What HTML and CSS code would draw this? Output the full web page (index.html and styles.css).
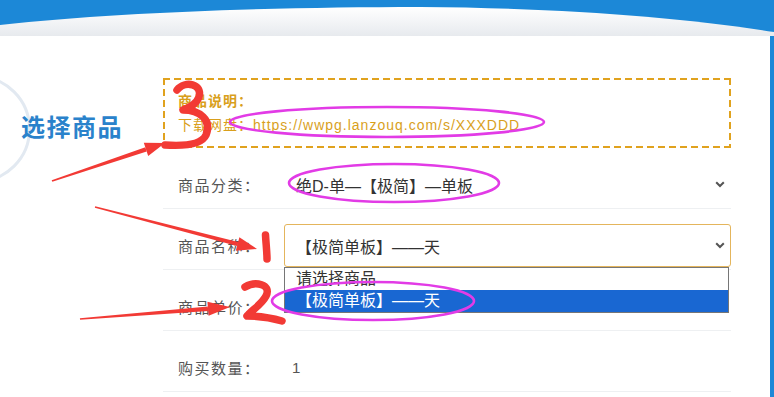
FILE: index.html
```html
<!DOCTYPE html>
<html lang="zh-CN">
<head>
<meta charset="utf-8">
<title>选择商品</title>
<link rel="stylesheet" href="styles.css">
</head>
<body>
<header class="top">
  <svg width="774" height="36" viewBox="0 0 774 36">
    <defs>
      <linearGradient id="wave" x1="0" y1="0" x2="0" y2="1">
        <stop offset="0" stop-color="#ffffff"/>
        <stop offset="1" stop-color="#e7eaee"/>
      </linearGradient>
    </defs>
    <path d="M0,25 C120,12 280,7 420,7 C560,8 680,17 774,32 L774,36 L0,36 Z" fill="url(#wave)"/>
  </svg>
</header>
<div class="panel">
  <aside class="side">
    <h2 class="title">选择商品</h2>
  </aside>
  <main class="main">
    <div class="notice">
      <p class="notice-title">商品说明：</p>
      <p class="notice-text">下载网盘：https://wwpg.lanzouq.com/s/XXXDDD</p>
    </div>
    <div class="row">
      <span class="label">商品分类：</span>
      <div class="field">
        <span>绝D-单—【极简】—单板</span>
        <svg class="chev" width="10" height="7" viewBox="0 0 10 7"><polyline points="1.2,1.2 5,5 8.8,1.2" fill="none" stroke="#555" stroke-width="2"/></svg>
      </div>
    </div>
    <div class="row">
      <span class="label">商品名称：</span>
      <div class="field boxed">
        <span>【极简单板】——天</span>
        <svg class="chev" width="10" height="7" viewBox="0 0 10 7"><polyline points="1.2,1.2 5,5 8.8,1.2" fill="none" stroke="#555" stroke-width="2"/></svg>
        <div class="dropdown">
          <div class="opt">请选择商品</div>
          <div class="opt sel">【极简单板】——天</div>
        </div>
      </div>
    </div>
    <div class="row">
      <span class="label">商品单价：</span>
      <div class="field"></div>
    </div>
    <div class="row">
      <span class="label">购买数量：</span>
      <div class="field qty">1</div>
    </div>
  </main>
</div>
<svg class="marks" width="774" height="397" viewBox="0 0 774 397">
  <g fill="none" stroke="#e23be6" stroke-width="2.6">
    <ellipse cx="387" cy="122" rx="157" ry="15"/>
    <ellipse cx="394" cy="183" rx="105" ry="19"/>
    <ellipse cx="373" cy="301" rx="101" ry="19"/>
  </g>
  <g fill="#f23a35">
    <polygon points="52.3,181.8 51.7,180.2 145.3,147.3 146.7,151.5"/>
    <polygon points="165,143 148.2,156 143.8,142.8"/>
    <polygon points="94.8,207.8 95.2,206.2 238.2,241.9 237.1,246.1"/>
    <polygon points="257,249 235.8,250.8 239.4,237.2"/>
    <polygon points="80.1,319.8 79.9,318.2 207.8,306.6 208.2,311"/>
    <polygon points="230,307 208.6,315.8 207.4,301.8"/>
  </g>
  <g fill="none" stroke="#f23a35" stroke-width="7.5" stroke-linecap="round" stroke-linejoin="round">
    <path d="M177,90 C185,80 203,84 199,97 C196,105 188,108 183,110 C200,110 212,120 206,135 C201,146 180,146 165,145"/>
    <path d="M265.5,235 C266,244 267,252 267,259"/>
    <path d="M245,287 C255,281 272,284 266,296 C262,304 252,310 247,316 C258,316 272,318 282,321"/>
  </g>
</svg>
</body>
</html>
```

FILE: styles.css
```css
* {
  box-sizing: border-box;
}

html,
body {
  margin: 0;
  padding: 0;
}

body {
  position: relative;
  width: 774px;
  height: 397px;
  overflow: hidden;
  background: #1c88d7;
  font-family: "Liberation Sans", "Noto Sans CJK SC", sans-serif;
}

.top {
  display: block;
  height: 36px;
}

.top svg {
  display: block;
}

.panel {
  display: flex;
  width: 770px;
  height: 361px;
  background: #fff;
}

.side {
  position: relative;
  flex: none;
  width: 163px;
  overflow: hidden;
  padding: 77px 0 0 21px;
}

.side::before {
  content: "";
  position: absolute;
  left: -77px;
  top: 39px;
  width: 102px;
  height: 102px;
  border: 3px solid #e2e9f1;
  border-radius: 50%;
}

.title {
  position: relative;
  margin: 0;
  font-family: "Noto Sans CJK SC", sans-serif;
  font-size: 24px;
  line-height: 26px;
  font-weight: 700;
  letter-spacing: 1.5px;
  color: #2a82cb;
}

.main {
  flex: none;
  width: 568px;
  padding-top: 42px;
}

.notice {
  height: 70px;
  padding: 11px 15px;
  color: #d99f1c;
  background:
    linear-gradient(90deg, #e0a21e 7px, transparent 0) left top / 11px 2px repeat-x,
    linear-gradient(90deg, #e0a21e 7px, transparent 0) left bottom / 11px 2px repeat-x,
    linear-gradient(180deg, #e0a21e 7px, transparent 0) left top / 2px 11px repeat-y,
    linear-gradient(180deg, #e0a21e 7px, transparent 0) right top / 2px 11px repeat-y;
}

.notice-title {
  margin: 0;
  font-size: 14px;
  line-height: 24px;
  font-weight: 700;
  letter-spacing: 1px;
}

.notice-text {
  margin: 0;
  font-size: 14px;
  line-height: 24px;
  letter-spacing: 1px;
}

.row {
  display: flex;
  align-items: center;
  height: 61px;
  padding: 15px 0 2px 15px;
  border-bottom: 1px solid #eef0f2;
}

.label {
  flex: none;
  width: 106px;
  font-size: 15px;
  letter-spacing: 1.5px;
  color: #555;
}

.field {
  position: relative;
  flex: 1;
  display: flex;
  align-items: center;
  height: 43px;
  padding: 0 6px 0 12px;
  font-size: 16px;
  color: #333;
}

.field.boxed {
  border: 1px solid #e4b55c;
  border-radius: 3px;
  padding: 0 5px 0 11px;
}

.field.qty {
  padding-left: 8px;
  font-size: 15px;
  color: #555;
}

.chev {
  flex: none;
  margin-left: auto;
}

.dropdown {
  position: absolute;
  left: -1px;
  top: calc(100% + 1px);
  width: 445px;
  border: 1px solid #767676;
  background: #fff;
  z-index: 2;
}

.opt {
  height: 22px;
  line-height: 22px;
  padding-left: 11px;
  font-size: 16px;
  color: #333;
  white-space: nowrap;
}

.opt.sel {
  background: #1967d2;
  color: #fff;
}

.marks {
  position: absolute;
  left: 0;
  top: 0;
  z-index: 5;
  pointer-events: none;
}
```
